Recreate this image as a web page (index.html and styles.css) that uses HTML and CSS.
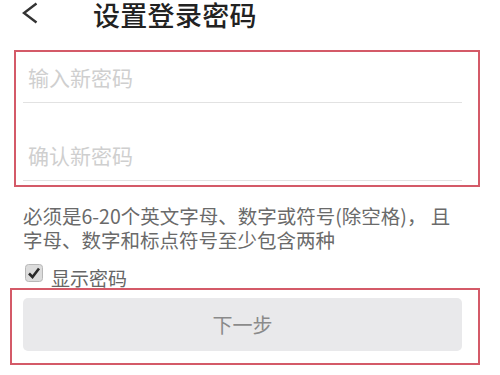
FILE: index.html
```html
<!DOCTYPE html>
<html lang="zh-CN">
<head>
<meta charset="utf-8">
<link rel="stylesheet" href="styles.css">
</head>
<body>
<div class="page">
  <header class="header">
    <svg class="back" width="16" height="22" viewBox="0 0 16 22"><polyline points="14.5,1.5 2,11 14.5,20.5" fill="none" stroke="#333" stroke-width="2.4" stroke-linejoin="miter"/></svg>
    <h1 class="title">设置登录密码</h1>
  </header>
  <section class="mark fields">
    <div class="field first">输入新密码</div>
    <div class="field second">确认新密码</div>
  </section>
  <p class="hint">必须是6-20个英文字母、数字或符号(除空格)， 且<br>字母、数字和标点符号至少包含两种</p>
  <div class="show">
    <svg class="check" width="18" height="18" viewBox="0 0 18 18"><rect x="0.5" y="0.5" width="17" height="17" rx="3" fill="#dcdcdc" stroke="#b8b8b8"/><polyline points="4,9.5 7.5,13 14,4.5" fill="none" stroke="#2a2a2a" stroke-width="2.6"/></svg>
    <span class="show-label">显示密码</span>
  </div>
  <section class="mark action">
    <div class="btn">下一步</div>
  </section>
</div>
</body>
</html>
```

FILE: styles.css
```css
html, body {
  margin: 0;
  padding: 0;
  background: #fff;
}
* {
  box-sizing: border-box;
}
.page {
  width: 500px;
  height: 375px;
  overflow: hidden;
  font-family: "Noto Sans CJK SC", "Noto Sans", sans-serif;
}
.header {
  display: flex;
  align-items: center;
  height: 30px;
  padding-left: 22px;
}
.back {
  display: block;
  margin-top: -4px;
}
.title {
  margin: 0 0 0 55px;
  font-size: 27px;
  font-weight: 500;
  line-height: 30px;
  color: #222;
  letter-spacing: 0.3px;
}
.mark {
  border: 2px solid #d45a68;
}
.fields {
  margin: 20px 0 0 14px;
  width: 466px;
  padding: 0 16px 4px 7px;
}
.field {
  height: 51px;
  line-height: 51px;
  padding-left: 5px;
  font-size: 21px;
  color: #cfcfcf;
  border-bottom: 1px solid #e2e2e2;
}
.second {
  margin-top: 27px;
}
.hint {
  margin: 17px 0 0 23px;
  font-size: 19.5px;
  line-height: 24px;
  color: #6a6a6a;
  white-space: nowrap;
}
.show {
  display: flex;
  align-items: flex-start;
  height: 24px;
  margin: 12px 0 0 25px;
}
.check {
  display: block;
}
.show-label {
  margin: 4px 0 0 8px;
  font-size: 19px;
  line-height: 20px;
  color: #666;
}
.action {
  margin-left: 10px;
  width: 470px;
  padding: 8px 16px 12px 11px;
}
.btn {
  height: 53px;
  line-height: 53px;
  border-radius: 5px;
  background: #e9e9eb;
  text-align: center;
  font-size: 20px;
  color: #8a8a8a;
}
```
